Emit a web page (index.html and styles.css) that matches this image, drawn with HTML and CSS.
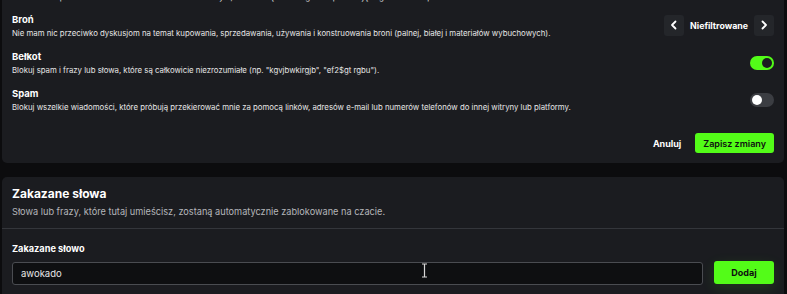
FILE: index.html
```html
<!DOCTYPE html>
<html lang="pl">
<head>
    <meta charset="UTF-8">
    <meta name="viewport" content="width=device-width, initial-scale=1.0">
    <title>Filtry czatu</title>
    <link rel="stylesheet" href="styles.css">
</head>
<body>
    <div class="page">
        <section class="card card-filters">
            <div class="filter filter-partial">
                <p class="filter-desc">Nie mam nic przeciwko treściom o charakterze seksualnym, o ile nie są one wulgarne i pozostają w granicach dopuszczalności.</p>
            </div>

            <div class="filter">
                <div class="filter-text">
                    <h3 class="filter-title">Broń</h3>
                    <p class="filter-desc">Nie mam nic przeciwko dyskusjom na temat kupowania, sprzedawania, używania i konstruowania broni (palnej, białej i materiałów wybuchowych).</p>
                </div>
                <div class="selector">
                    <button class="selector-arrow" aria-label="Poprzedni">
                        <svg width="10" height="10" viewBox="0 0 10 10"><path d="M6.5 1.5 3 5l3.5 3.5" fill="none" stroke="#fff" stroke-width="1.8" stroke-linecap="round" stroke-linejoin="round"/></svg>
                    </button>
                    <span class="selector-value">Niefiltrowane</span>
                    <button class="selector-arrow" aria-label="Następny">
                        <svg width="10" height="10" viewBox="0 0 10 10"><path d="M3.5 1.5 7 5 3.5 8.5" fill="none" stroke="#fff" stroke-width="1.8" stroke-linecap="round" stroke-linejoin="round"/></svg>
                    </button>
                </div>
            </div>

            <div class="filter">
                <div class="filter-text">
                    <h3 class="filter-title">Bełkot</h3>
                    <p class="filter-desc">Blokuj spam i frazy lub słowa, które są całkowicie niezrozumiałe (np. "kgvjbwkirgjb", "ef2$gt rgbu").</p>
                </div>
                <span class="toggle toggle-on"><span class="toggle-knob"></span></span>
            </div>

            <div class="filter">
                <div class="filter-text">
                    <h3 class="filter-title">Spam</h3>
                    <p class="filter-desc">Blokuj wszelkie wiadomości, które próbują przekierować mnie za pomocą linków, adresów e-mail lub numerów telefonów do innej witryny lub platformy.</p>
                </div>
                <span class="toggle"><span class="toggle-knob"></span></span>
            </div>

            <div class="card-actions">
                <button class="btn-link">Anuluj</button>
                <button class="btn-primary">Zapisz zmiany</button>
            </div>
        </section>

        <section class="card card-words">
            <div class="card-head">
                <h2 class="card-title">Zakazane słowa</h2>
                <p class="card-subtitle">Słowa lub frazy, które tutaj umieścisz, zostaną automatycznie zablokowane na czacie.</p>
            </div>
            <div class="card-body">
                <label class="field-label" for="word">Zakazane słowo</label>
                <div class="word-form">
                    <div class="input-wrap">
                        <input class="word-input" id="word" type="text" value="awokado">
                        <svg class="ibeam" width="7" height="15" viewBox="0 0 7 15"><path d="M1 1h5M1 14h5M3.5 1v13" fill="none" stroke="#d8d8d8" stroke-width="1.2"/></svg>
                    </div>
                    <button class="btn-primary btn-add">Dodaj</button>
                </div>
            </div>
        </section>
    </div>
</body>
</html>
```

FILE: styles.css
```css
body {
    margin: 0;
    background-color: #0c0c0e;
    font-family: Inter, "Noto Sans", sans-serif;
    color: #fff;
    overflow: hidden;
}
.page {
    padding: 0 3px 0 2px;
}
.card {
    background-color: #1b1c20;
    border-radius: 5px;
}
.card-filters {
    margin-top: -20px;
    padding: 10px 10px 10px;
    display: flex;
    flex-direction: column;
    gap: 10px;
}
.filter {
    display: flex;
    align-items: center;
    justify-content: space-between;
    gap: 20px;
}
.filter-partial {
    margin-bottom: -1px;
}
.filter-title {
    margin: 0;
    font-size: 9.5px;
    line-height: 13px;
    font-weight: 700;
}
.filter-desc {
    margin: 1px 0 0;
    font-size: 7.8px;
    line-height: 13px;
    color: #e6e6e6;
}
.selector {
    display: flex;
    align-items: center;
    gap: 6px;
    margin-bottom: 3px;
}
.selector-arrow {
    width: 20px;
    height: 21px;
    padding: 0;
    border: none;
    border-radius: 3px;
    background-color: #24262a;
    display: flex;
    align-items: center;
    justify-content: center;
}
.selector-value {
    font-size: 8.8px;
    font-weight: 700;
}
.toggle {
    position: relative;
    flex: none;
    width: 24px;
    height: 14px;
    border-radius: 7px;
    background-color: #3b3d42;
    margin-bottom: 2px;
}
.toggle-knob {
    position: absolute;
    top: 2px;
    left: 2px;
    width: 10px;
    height: 10px;
    border-radius: 50%;
    background-color: #fff;
}
.toggle-on {
    background-color: #53fc18;
}
.toggle-on .toggle-knob {
    left: 12px;
    background-color: #1b1c20;
}
.card-actions {
    display: flex;
    justify-content: flex-end;
    align-items: center;
    gap: 8px;
    margin-top: 9px;
}
.btn-link {
    background: none;
    border: none;
    padding: 0 6px;
    font-family: inherit;
    font-size: 9px;
    font-weight: 700;
    color: #fff;
}
.btn-primary {
    height: 20px;
    padding: 0 8px;
    border: none;
    border-radius: 3px;
    background-color: #53fc18;
    font-family: inherit;
    font-size: 9px;
    font-weight: 600;
    color: #0e0f10;
}
.card-words {
    margin-top: 14px;
    border-radius: 5px 5px 0 0;
    height: 130px;
}
.card-head {
    padding: 9px 10px 10px;
    border-bottom: 1px solid #34363b;
}
.card-title {
    margin: 0;
    font-size: 12px;
    line-height: 16px;
    font-weight: 700;
}
.card-subtitle {
    margin: 3px 0 0;
    font-size: 9.2px;
    line-height: 13px;
    color: #b4b6ba;
}
.card-body {
    padding: 13px 10px 0;
}
.field-label {
    display: block;
    font-size: 9.2px;
    line-height: 13px;
    font-weight: 700;
}
.word-form {
    display: flex;
    gap: 11px;
    margin-top: 6px;
}
.input-wrap {
    position: relative;
    flex: 1;
}
.word-input {
    box-sizing: border-box;
    width: 100%;
    height: 23px;
    padding: 0 8px;
    border: 1px solid #4a4c51;
    border-radius: 3px;
    background-color: #0e0f11;
    font-family: inherit;
    font-size: 9.5px;
    color: #e8e8e8;
    outline: none;
}
.ibeam {
    position: absolute;
    left: 409px;
    top: 2px;
}
.btn-add {
    width: 60px;
    height: 23px;
    padding: 0;
    font-weight: 700;
    box-shadow: 0 4px 14px rgba(83, 252, 24, 0.12);
}
```
